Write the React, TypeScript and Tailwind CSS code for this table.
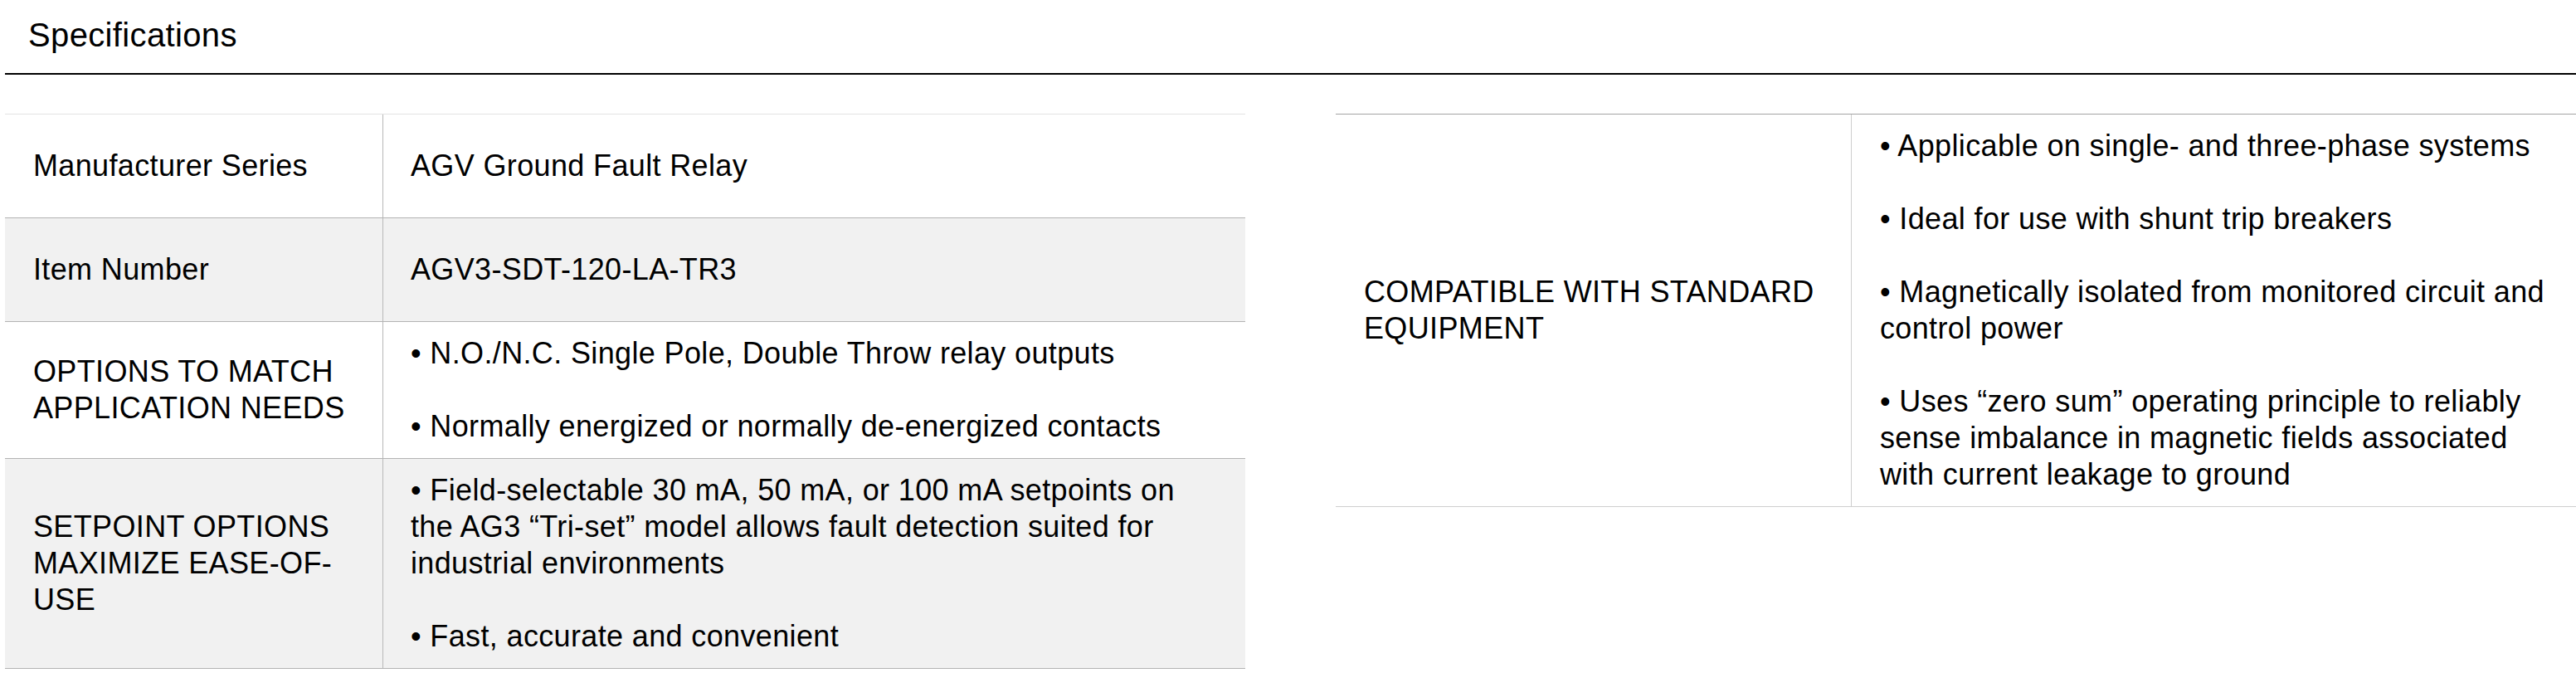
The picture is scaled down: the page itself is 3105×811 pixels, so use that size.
const leftRows = [
  { label: 'Manufacturer Series', values: ['AGV Ground Fault Relay'] },
  { label: 'Item Number', values: ['AGV3-SDT-120-LA-TR3'] },
  {
    label: 'OPTIONS TO MATCH APPLICATION NEEDS',
    values: [
      '• N.O./N.C. Single Pole, Double Throw relay outputs',
      '• Normally energized or normally de-energized contacts',
    ],
  },
  {
    label: 'SETPOINT OPTIONS MAXIMIZE EASE-OF-USE',
    values: [
      '• Field-selectable 30 mA, 50 mA, or 100 mA setpoints on the AG3 \u201CTri-set\u201D model allows fault detection suited for industrial environments',
      '• Fast, accurate and convenient',
    ],
  },
];

const rightValues = [
  '• Applicable on single- and three-phase systems',
  '• Ideal for use with shunt trip breakers',
  '• Magnetically isolated from monitored circuit and control power',
  '• Uses \u201Czero sum\u201D operating principle to reliably sense imbalance in magnetic fields associated with current leakage to ground',
];

function Values({ items }: { items: string[] }) {
  return (
    <div className="flex flex-col gap-[44px]">
      {items.map((v, i) => (
        <p key={i}>{v}</p>
      ))}
    </div>
  );
}

export default function App() {
  return (
    <div className="min-h-screen bg-white pl-[6px] font-['Liberation_Sans',Arial,sans-serif] text-[36px] leading-[44px] tracking-[0.01em] text-black">
      <div className="border-b-2 border-black pl-[28px] pt-[18px] pb-[22px] text-[40px] leading-[48px]">
        Specifications
      </div>

      <div className="mt-[47px] grid grid-cols-2 items-start gap-[109px]">
        {/* left table */}
        <div className="border-t border-[#e3e3e3]">
          {leftRows.map((row, i) => (
            <div
              key={i}
              className={`grid grid-cols-[456px_1fr] border-b border-[#b3b3b3] ${
                i % 2 === 1 ? 'bg-[#f1f1f1]' : 'bg-white'
              }`}
            >
              <div className="flex min-h-[124px] items-center border-r border-[#b8b8b8] py-4 pl-[34px] pr-[30px]">
                {row.label}
              </div>
              <div className="flex items-center py-4 pl-[33px] pr-[60px]">
                <Values items={row.values} />
              </div>
            </div>
          ))}
        </div>

        {/* right table */}
        <div className="border-t border-b border-t-[#a3a3a3] border-b-[#cfcfcf]">
          <div className="grid grid-cols-[622px_1fr]">
            <div className="flex items-center border-r border-[#cfcfcf] py-4 pl-[34px] pr-5">
              COMPATIBLE WITH STANDARD EQUIPMENT
            </div>
            <div className="py-4 pl-[34px] pr-[30px]">
              <Values items={rightValues} />
            </div>
          </div>
        </div>
      </div>
    </div>
  );
}
